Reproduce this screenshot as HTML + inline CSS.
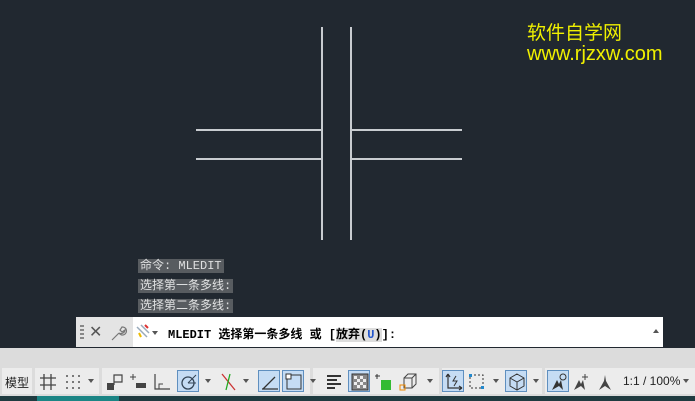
<!DOCTYPE html>
<html><head><meta charset="utf-8"><style>
*{margin:0;padding:0;box-sizing:border-box}
body{width:695px;height:401px;overflow:hidden;background:#212830;position:relative;font-family:"Liberation Sans","Noto Sans CJK SC",sans-serif}
.l{position:absolute;background:#c8ccd0}
.wm{position:absolute;color:#f0f000;font-size:19px}
.h{position:absolute;left:138px;background:#585c60;color:#dfe0e1;font-size:12px;line-height:14px;padding:0 2px;font-family:"Liberation Mono","Noto Sans CJK SC",monospace}
#cmd{position:absolute;left:76px;top:317px;width:587px;height:30px;background:#fff}
#cmdl{position:absolute;left:0;top:0;width:57px;height:30px;background:#e4e4e4}
#sb{position:absolute;left:0;top:348px;width:695px;height:48px;background:#dcdcdc}
#bot{position:absolute;left:0;top:396px;width:695px;height:5px;background:#1f3b40}
.g{position:absolute;top:368px;height:26px;background:#ececec}
.b{position:absolute;top:370px;width:22px;height:22px}
.sel{background:#c5dcf4;border:1px solid #5f8fbf}
.ar{position:absolute;top:379px;width:0;height:0;border-left:3.5px solid transparent;border-right:3.5px solid transparent;border-top:4px solid #555}
</style></head><body>
<div class="l" style="left:321px;top:27px;width:1.5px;height:213px"></div>
<div class="l" style="left:350px;top:27px;width:1.5px;height:213px"></div>
<div class="l" style="left:196px;top:129px;width:126px;height:1.5px"></div>
<div class="l" style="left:196px;top:158px;width:126px;height:1.5px"></div>
<div class="l" style="left:351px;top:129px;width:111px;height:1.5px"></div>
<div class="l" style="left:351px;top:158px;width:111px;height:1.5px"></div>
<div class="wm" style="left:527px;top:18px">软件自学网</div>
<div class="wm" style="left:527px;top:43px;font-size:20px">www.rjzxw.com</div>
<div class="h" style="top:259px">命令: MLEDIT</div>
<div class="h" style="top:279px">选择第一条多线:</div>
<div class="h" style="top:299px">选择第二条多线:</div>
<div id="cmd"><div id="cmdl"></div>
<div style="position:absolute;left:4px;top:8px;width:4px;height:14px;border-left:2px dotted #888;border-right:2px dotted #888"></div>
<div style="position:absolute;left:13px;top:5px;font-size:16px;color:#555">✕</div>
<svg style="position:absolute;left:33px;top:7px" width="18" height="18"><path d="M3 16l7-7M10 9a4 4 0 1 0 3-6l-2 3 2 2 3-2a4 4 0 0 1-6 3" stroke="#777" fill="none" stroke-width="1.2"/></svg>
<svg style="position:absolute;left:59px;top:6px" width="26" height="18"><path d="M2 4 L12 14 M6 2 L14 10" stroke="#9ab" stroke-width="1.5"/><path d="M10 2l3 3" stroke="#d33" stroke-width="2"/><path d="M4 10l2 4" stroke="#eb0" stroke-width="2"/><path d="M17 8h6l-3 4z" fill="#555"/></svg>
<div style="position:absolute;left:92px;top:8px;font-size:12px;font-weight:bold;font-family:'Liberation Mono','Noto Sans CJK SC',monospace;color:#000;white-space:pre">MLEDIT 选择第一条多线 或 [<span style="background:#ddd">放弃(<span style="color:#2255cc">U</span>)</span>]:</div>
<div style="position:absolute;right:4px;top:12px;border-left:3.5px solid transparent;border-right:3.5px solid transparent;border-bottom:4px solid #555"></div>
</div>
<div id="sb"></div>
<div class="g" style="left:2px;width:30px"></div>
<div style="position:absolute;left:5px;top:374px;font-size:12px;color:#222">模型</div>
<div class="g" style="left:35px;width:64px"></div>
<div class="g" style="left:102px;width:208px"></div>
<div class="g" style="left:313px;width:126px"></div>
<div class="g" style="left:442px;width:100px"></div>
<div class="g" style="left:545px;width:150px"></div>
<svg style="position:absolute;left:38px;top:372px" width="20" height="20"><path d="M6 2v16M13 2v16M2 6h16M2 13h16" stroke="#444" stroke-width="1.3"/></svg>
<svg style="position:absolute;left:63px;top:372px" width="20" height="20" fill="#555"><circle cx="4" cy="4" r="1"/><circle cx="10" cy="4" r="1"/><circle cx="16" cy="4" r="1"/><circle cx="4" cy="10" r="1"/><circle cx="10" cy="10" r="1"/><circle cx="16" cy="10" r="1"/><circle cx="4" cy="16" r="1"/><circle cx="10" cy="16" r="1"/><circle cx="16" cy="16" r="1"/></svg>
<div class="ar" style="left:88px"></div>
<svg style="position:absolute;left:105px;top:372px" width="20" height="20"><rect x="2" y="11" width="7" height="7" fill="#444"/><path d="M9 13V3h8v7h-8" stroke="#444" fill="none" stroke-width="1.2"/></svg>
<svg style="position:absolute;left:128px;top:372px" width="20" height="20"><path d="M2 5h6M5 2v6" stroke="#444"/><rect x="8" y="11" width="10" height="5" fill="#444"/></svg>
<svg style="position:absolute;left:152px;top:372px" width="20" height="20"><path d="M3 2v15h15" stroke="#444" fill="none" stroke-width="1.2"/><path d="M7 17v-5h4" stroke="#444" fill="none"/></svg>
<div class="b sel" style="left:177px"></div>
<svg style="position:absolute;left:179px;top:372px" width="20" height="20"><circle cx="9" cy="11" r="6" stroke="#345" fill="none" stroke-width="1.3"/><path d="M9 11l8-8M9 11h8" stroke="#345" fill="none"/></svg>
<div class="ar" style="left:205px"></div>
<svg style="position:absolute;left:218px;top:372px" width="20" height="20"><path d="M4 2l13 16" stroke="#c33" stroke-width="1.3"/><path d="M12 2l-4 16" stroke="#2a2" stroke-width="1.3"/></svg>
<div class="ar" style="left:243px"></div>
<div class="b sel" style="left:258px"></div>
<svg style="position:absolute;left:260px;top:372px" width="20" height="20"><path d="M2 17h16M3 17l12-12" stroke="#333" stroke-width="1.3"/></svg>
<div class="b sel" style="left:282px"></div>
<svg style="position:absolute;left:284px;top:372px" width="20" height="20"><rect x="3" y="3" width="14" height="14" stroke="#333" fill="none"/><rect x="2" y="2" width="5" height="5" fill="#fff" stroke="#333"/></svg>
<div class="ar" style="left:310px"></div>
<svg style="position:absolute;left:324px;top:372px" width="20" height="20"><path d="M3 4h14M3 8h10M3 12h14M3 16h8" stroke="#333" stroke-width="2"/></svg>
<div class="b sel" style="left:348px"></div>
<svg style="position:absolute;left:350px;top:372px" width="20" height="20"><rect x="2" y="2" width="16" height="16" fill="#888" stroke="#333"/><path d="M4 4h3v3H4zM10 4h3v3h-3zM7 7h3v3H7zM13 7h3v3h-3zM4 10h3v3H4zM10 10h3v3h-3zM7 13h3v3H7zM13 13h3v3h-3z" fill="#eee"/></svg>
<svg style="position:absolute;left:373px;top:372px" width="20" height="20"><path d="M2 4h5M4 2v5" stroke="#333"/><rect x="8" y="8" width="10" height="10" fill="#3b3"/></svg>
<svg style="position:absolute;left:398px;top:372px" width="20" height="20"><path d="M6 6l4-4h8v10l-4 4M6 6h8v10H6zM14 6l4-4" stroke="#444" fill="none"/><rect x="2" y="13" width="5" height="5" stroke="#e80" fill="none"/></svg>
<div class="ar" style="left:427px"></div>
<div class="b sel" style="left:442px"></div>
<svg style="position:absolute;left:444px;top:372px" width="20" height="20"><path d="M4 2v14h14M4 2l-2 3M4 2l2 3M18 16l-3-2M18 16l-3 2" stroke="#333" fill="none" stroke-width="1.2"/><path d="M12 4l-3 5h4l-3 5" stroke="#333" fill="none"/></svg>
<svg style="position:absolute;left:466px;top:372px" width="20" height="20"><rect x="4" y="3" width="13" height="13" stroke="#333" stroke-dasharray="2 2" fill="none"/><rect x="3" y="2" width="3" height="3" fill="#28c"/><rect x="15" y="14" width="3" height="3" fill="#28c"/></svg>
<div class="ar" style="left:493px"></div>
<div class="b sel" style="left:505px"></div>
<svg style="position:absolute;left:507px;top:372px" width="20" height="20"><path d="M10 2l7 4v8l-7 4-7-4V6zM10 10v8M10 10l7-4M10 10L3 6" stroke="#333" fill="none"/></svg>
<div class="ar" style="left:533px"></div>
<div class="b sel" style="left:547px"></div>
<svg style="position:absolute;left:549px;top:372px" width="20" height="20"><path d="M3 18l5-10 2 4 2-4 2 10-4-4z" fill="#333"/><circle cx="14" cy="5" r="3" stroke="#333" fill="none"/></svg>
<svg style="position:absolute;left:571px;top:372px" width="20" height="20"><path d="M3 18l5-10 2 4 2-4 2 10-4-4z" fill="#444"/><path d="M14 2v6M11 5h6" stroke="#444"/></svg>
<svg style="position:absolute;left:596px;top:372px" width="20" height="20"><path d="M3 18l5-9 1-6 1 6 5 9-6-4z" fill="#444"/></svg>
<div style="position:absolute;left:623px;top:374px;font-size:12px;color:#222">1:1 / 100%</div>
<div class="ar" style="left:683px"></div>
<div id="bot"></div>
<div style="position:absolute;left:37px;top:396px;width:82px;height:5px;background:#1b8585"></div>
</body></html>
